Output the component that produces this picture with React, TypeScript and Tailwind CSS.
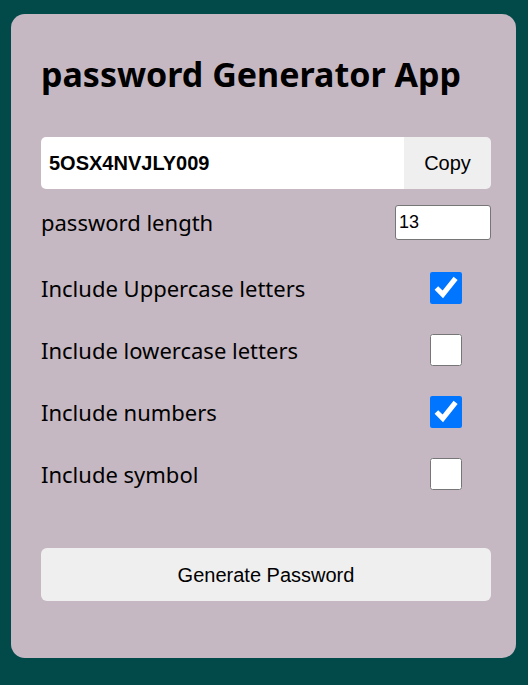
import React from 'react'

const options = [
  { label: 'Include Uppercase letters', checked: true },
  { label: 'Include lowercase letters', checked: false },
  { label: 'Include numbers', checked: true },
  { label: 'Include symbol', checked: false },
]

const App = () => {
  return (
    <div className="min-h-screen bg-[#024a4a] pt-[14px] pl-[11px] pr-[12px] pb-[27px] font-['Noto_Sans',sans-serif]">
      <div className="bg-[#c6b8c2] rounded-[14px] h-[644px] pl-[30px] pr-[25px] pt-[40px]">
        <h1 className="text-[34px] font-bold leading-[40px] text-black">password Generator App</h1>

        <div className="flex mt-[43px] h-[52px] rounded-[5px] overflow-hidden">
          <input
            type="text"
            readOnly
            value="5OSX4NVJLY009"
            className="flex-1 bg-white px-2 font-['Liberation_Sans',sans-serif] font-bold text-[20px] text-black outline-none"
          />
          <button className="w-[87px] bg-[#efefef] font-['Liberation_Sans',sans-serif] text-[20px] text-black">Copy</button>
        </div>

        <div className="flex items-center justify-between mt-4 h-[35px]">
          <label className="text-[22px] text-black">password length</label>
          <input
            type="text"
            defaultValue="13"
            className="w-[96px] h-[35px] border border-[#767676] rounded-[3px] bg-white px-[3px] font-['Liberation_Sans',sans-serif] text-[18px] text-black"
          />
        </div>

        <div className="mt-[17px]">
          {options.map((o) => (
            <div key={o.label} className="flex items-center justify-between h-[62px]">
              <label className="text-[22px] text-black">{o.label}</label>
              <input type="checkbox" defaultChecked={o.checked} className="w-[32px] h-[32px] mr-[29px] m-0" />
            </div>
          ))}
        </div>

        <button className="mt-[43px] w-full h-[53px] rounded-[6px] bg-[#efefef] font-['Liberation_Sans',sans-serif] text-[20px] text-black">
          Generate Password
        </button>
      </div>
    </div>
  )
}

export default App
